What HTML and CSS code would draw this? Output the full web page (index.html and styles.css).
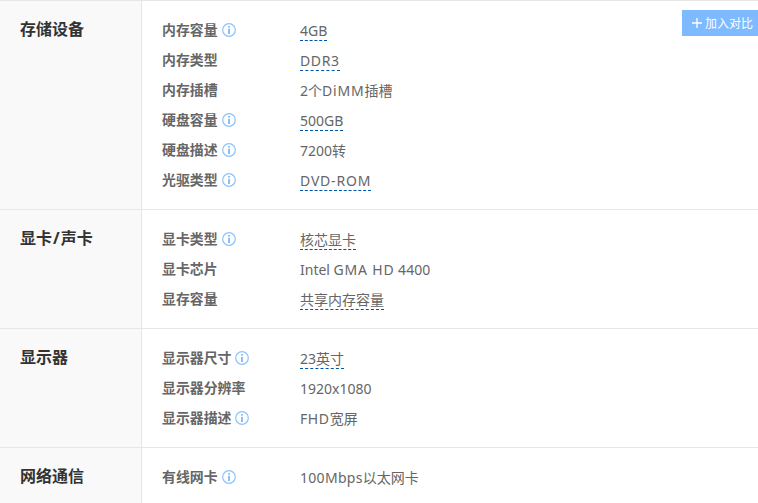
FILE: index.html
```html
<!DOCTYPE html>
<html lang="zh-CN">
<head>
<meta charset="utf-8">
<title>参数</title>
<link rel="stylesheet" href="styles.css">
</head>
<body>
<svg class="sprite" width="0" height="0" aria-hidden="true"><defs>
<symbol id="info" viewBox="0 0 14 14"><circle cx="7" cy="7" r="6.3" fill="none" stroke="#8cc3fb" stroke-width="1.2"/><rect x="6.2" y="3" width="1.6" height="1.6" fill="#6db1f7"/><rect x="6.2" y="5.8" width="1.6" height="5.2" fill="#6db1f7"/></symbol>
</defs></svg>
<main class="specs">
  <section class="group">
    <h3 class="group-title">存储设备</h3>
    <div class="rows">
      <button class="compare"><svg class="plus" viewBox="0 0 10 10"><path d="M5 0v10M0 5h10" stroke="#fff" stroke-width="1.3" fill="none"/></svg>加入对比</button>
      <div class="row"><span class="label">内存容量<svg class="info"><use href="#info"/></svg></span><span class="value"><a class="term">4GB</a></span></div>
      <div class="row"><span class="label">内存类型</span><span class="value"><a class="term wide">DDR3</a></span></div>
      <div class="row"><span class="label">内存插槽</span><span class="value">2个<span class="wider">DiMM</span>插槽</span></div>
      <div class="row"><span class="label">硬盘容量<svg class="info"><use href="#info"/></svg></span><span class="value"><a class="term">500GB</a></span></div>
      <div class="row"><span class="label">硬盘描述<svg class="info"><use href="#info"/></svg></span><span class="value">7200转</span></div>
      <div class="row"><span class="label">光驱类型<svg class="info"><use href="#info"/></svg></span><span class="value"><a class="term wider">DVD-ROM</a></span></div>
    </div>
  </section>
  <section class="group">
    <h3 class="group-title">显卡<span class="slash">/</span>声卡</h3>
    <div class="rows">
      <div class="row"><span class="label">显卡类型<svg class="info"><use href="#info"/></svg></span><span class="value"><a class="term">核芯显卡</a></span></div>
      <div class="row"><span class="label">显卡芯片</span><span class="value">Intel <span class="wider">GMA HD</span> 4400</span></div>
      <div class="row"><span class="label">显存容量</span><span class="value"><a class="term">共享内存容量</a></span></div>
    </div>
  </section>
  <section class="group">
    <h3 class="group-title">显示器</h3>
    <div class="rows">
      <div class="row"><span class="label">显示器尺寸<svg class="info"><use href="#info"/></svg></span><span class="value"><a class="term">23英寸</a></span></div>
      <div class="row"><span class="label">显示器分辨率</span><span class="value">1920x1080</span></div>
      <div class="row"><span class="label">显示器描述<svg class="info"><use href="#info"/></svg></span><span class="value"><span class="wide">FHD</span>宽屏</span></div>
    </div>
  </section>
  <section class="group">
    <h3 class="group-title">网络通信</h3>
    <div class="rows">
      <div class="row"><span class="label">有线网卡<svg class="info"><use href="#info"/></svg></span><span class="value"><span class="tight">100Mbps</span>以太网卡</span></div>
    </div>
  </section>
</main>
</body>
</html>
```
FILE: styles.css
```css
html, body { margin: 0; padding: 0; height: 503px; overflow: hidden; background: #fff; }
body { font-family: "Noto Sans", "Noto Sans CJK SC", sans-serif; color: #666; }
.sprite { display: block; height: 0; }
.group { display: flex; border-top: 1px solid #e6e6e6; min-height: 118px; }
.group:last-child { min-height: 0; height: 55px; }
.group-title {
  flex: 0 0 121px; margin: 0; padding: 13px 0 0 20px; background: #f9f9f9;
  border-right: 1px solid #e6e6e6; font-size: 16px; line-height: 30px; font-weight: 700; color: #333;
}
.slash { margin: 0 1px; }
.rows { position: relative; flex: 1; padding: 14px 0 14px 20px; }
.row { display: flex; height: 30px; font-size: 14px; }
.label { flex: 0 0 138px; display: flex; align-items: center; height: 28px; font-size: 13.9px; font-weight: 700; color: #666; }
.info { width: 14px; height: 14px; margin-left: 4px; position: relative; top: 1px; }
.value { margin-top: 6px; color: #666; line-height: 20px; }
.term { display: inline-block; box-sizing: border-box; height: 20px; border-bottom: 1px dashed #0054a6; line-height: 20px; }
.tight { letter-spacing: 0.3px; }
.wide { letter-spacing: 0.6px; }
.wider { letter-spacing: 0.8px; }
.compare {
  position: absolute; top: 9px; right: 0; display: flex; align-items: center; box-sizing: border-box; width: 76px; height: 26px; padding: 0 0 0 10px; margin: 0; border: 0;
  background: #7dbaff; color: #fff; font: 12px/26px "Noto Sans CJK SC", sans-serif;
}
.plus { width: 10px; height: 10px; margin-right: 3px; }
```
